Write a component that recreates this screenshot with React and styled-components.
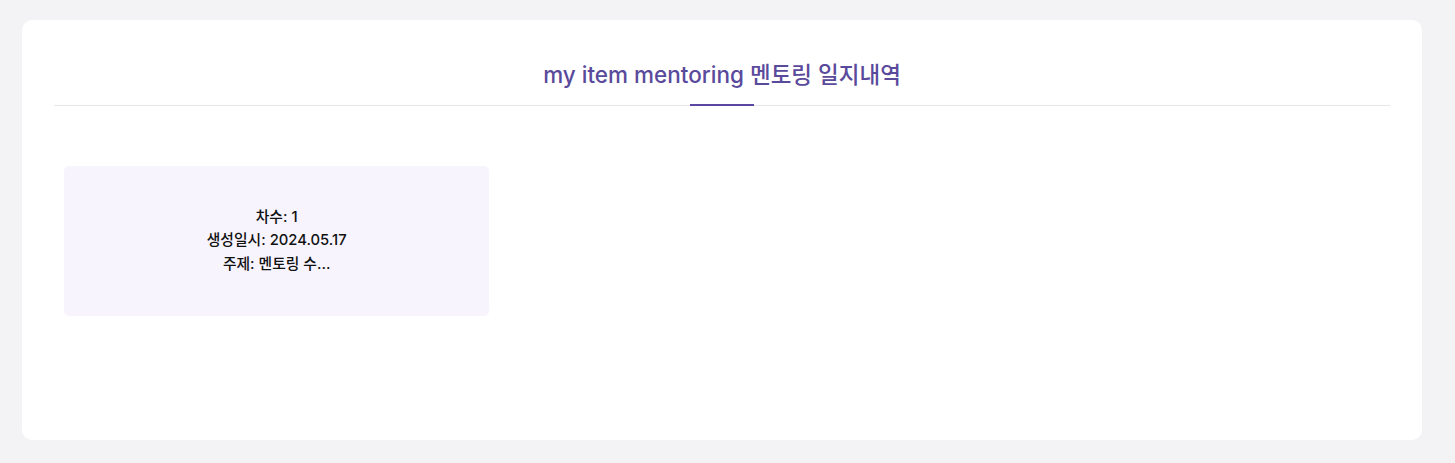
import React from "react";
import styled, { createGlobalStyle } from "styled-components";

const Global = createGlobalStyle`
  html, body { margin: 0; padding: 0; background: #f3f3f5; }
  body { font-family: Inter, "Noto Sans CJK KR", sans-serif; }
  * { box-sizing: border-box; }
`;

const Page = styled.div`
  padding: 20px 33px 23px 22px;
  min-height: 463px;
`;

const Panel = styled.section`
  background: #ffffff;
  border-radius: 10px;
  padding: 32px 32px 124px;
  height: 420px;
`;

const Header = styled.div`
  position: relative;
  text-align: center;
  border-bottom: 1px solid #e6e6ea;
  padding: 6px 0 13px;
`;

const Title = styled.h1`
  margin: 0;
  font-family: Inter, "Noto Sans CJK KR", sans-serif;
  font-size: 22.5px;
  line-height: 34px;
  font-weight: 500;
  color: #5a4a9c;
  letter-spacing: 0;
`;

const Underline = styled.span`
  position: absolute;
  left: 50%;
  bottom: -1px;
  transform: translateX(-50%);
  width: 64px;
  height: 2px;
  background: #5b46a3;
`;

const Grid = styled.div`
  display: grid;
  grid-template-columns: repeat(3, 1fr);
  gap: 20px;
  padding: 60px 10px 0;
`;

const Card = styled.div`
  height: 150px;
  background: #f7f4fe;
  border-radius: 5px;
  display: flex;
  flex-direction: column;
  align-items: center;
  justify-content: center;
  text-align: center;
`;

const Line = styled.div`
  font-family: Inter, "Noto Sans CJK KR", sans-serif;
  font-size: 14.8px;
  line-height: 23.5px;
  font-weight: 500;
  color: #111111;
`;

const items = [{ round: 1, date: "2024.05.17", subject: "멘토링 수..." }];

export default function App() {
  return (
    <>
      <Global />
      <Page>
        <Panel>
          <Header>
            <Title>my item mentoring 멘토링 일지내역</Title>
            <Underline />
          </Header>
          <Grid>
            {items.map((it) => (
              <Card key={it.round}>
                <Line>차수: {it.round}</Line>
                <Line>생성일시: {it.date}</Line>
                <Line>주제: {it.subject}</Line>
              </Card>
            ))}
          </Grid>
        </Panel>
      </Page>
    </>
  );
}
